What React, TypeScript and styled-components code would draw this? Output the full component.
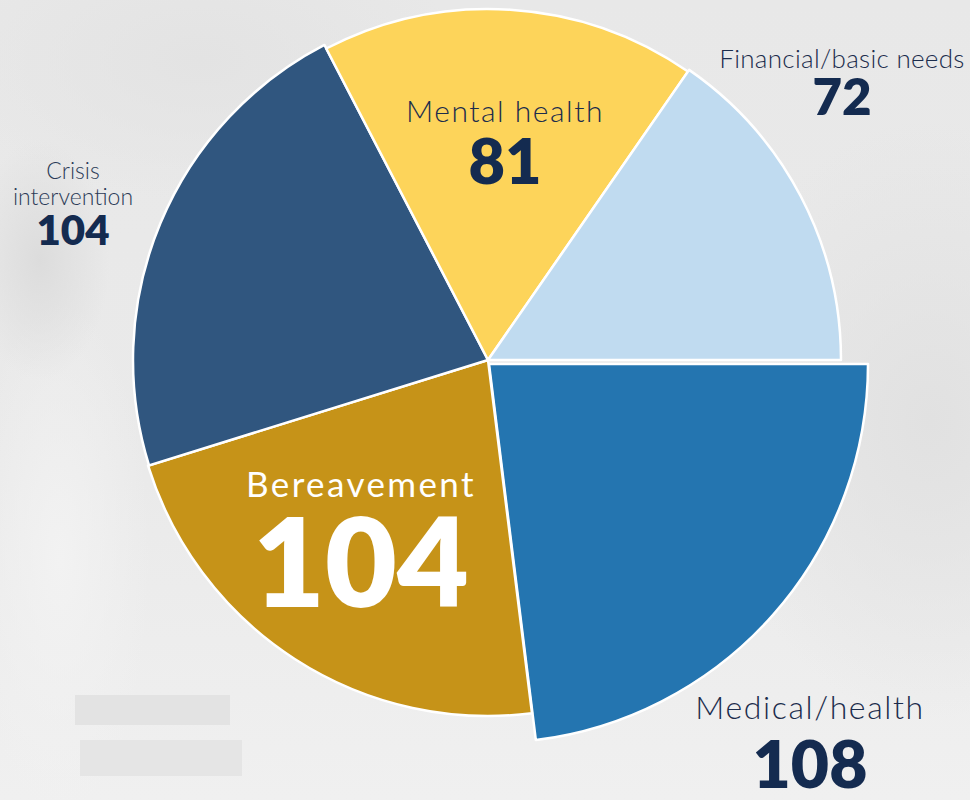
import React from 'react'
import styled, { createGlobalStyle } from 'styled-components'

const GlobalStyle = createGlobalStyle`
  html, body {
    margin: 0;
    padding: 0;
    background: #ececec;
  }
  * {
    box-sizing: border-box;
  }
`

type Slice = {
  label: string
  value: number
  color: string
  r: number
  cx: number
  cy: number
}

const slices: Slice[] = [
  { label: 'Medical/health', value: 108, color: '#2475b0', r: 379, cx: 489, cy: 364 },
  { label: 'Bereavement', value: 104, color: '#c69318', r: 356, cx: 488, cy: 360 },
  { label: 'Crisis intervention', value: 104, color: '#30567f', r: 355, cx: 488, cy: 360 },
  { label: 'Mental health', value: 81, color: '#fdd45a', r: 351, cx: 488, cy: 360 },
  { label: 'Financial/basic needs', value: 72, color: '#c0dbf0', r: 353, cx: 488, cy: 360 },
]

const total = slices.reduce((sum, s) => sum + s.value, 0)

function arcPath(cx: number, cy: number, r: number, a0: number, a1: number) {
  const rad = (a: number) => (a * Math.PI) / 180
  const x0 = cx + r * Math.cos(rad(a0))
  const y0 = cy + r * Math.sin(rad(a0))
  const x1 = cx + r * Math.cos(rad(a1))
  const y1 = cy + r * Math.sin(rad(a1))
  const large = a1 - a0 > 180 ? 1 : 0
  return `M ${cx} ${cy} L ${x0} ${y0} A ${r} ${r} 0 ${large} 1 ${x1} ${y1} Z`
}

const PieChart: React.FC = () => {
  let start = 0
  const paths = slices.map((s) => {
    const sweep = (s.value / total) * 360
    const d = arcPath(s.cx, s.cy, s.r, start, start + sweep)
    start += sweep
    return <path key={s.label} d={d} fill={s.color} stroke="#ffffff" strokeWidth={2.5} strokeLinejoin="round" />
  })
  return (
    <PieSvg viewBox="0 0 970 800" width={970} height={800}>
      {paths}
    </PieSvg>
  )
}

const App: React.FC = () => {
  return (
    <>
      <GlobalStyle />
      <Stage>
        <PieChart />

        <Callout $cx={505} $top={95} $width={260}>
          <Name $size={30} $spacing={1.5}>Mental health</Name>
          <Count $size={63} $gap={3}>81</Count>
        </Callout>

        <Callout $cx={842} $top={45} $width={260}>
          <Name $size={26} $spacing={0.3}>Financial/basic needs</Name>
          <Count $size={51} $gap={-1}>72</Count>
        </Callout>

        <Callout $cx={73} $top={157} $width={150}>
          <Name $size={23} $lh={26} $tone="#2c3b57">
            Crisis
            <br />
            intervention
          </Name>
          <Count $size={42} $gap={-1}>104</Count>
        </Callout>

        <Callout $cx={361} $top={466} $width={300}>
          <Name $size={35} $weight={400} $spacing={2.4} $tone="#ffffff">
            Bereavement
          </Name>
          <Count $size={124} $gap={-4} $tone="#ffffff">104</Count>
        </Callout>

        <Callout $cx={810} $top={691} $width={280}>
          <Name $size={32} $spacing={1.6}>Medical/health</Name>
          <Count $size={66} $gap={7}>108</Count>
        </Callout>
      </Stage>
    </>
  )
}

const Stage = styled.div`
  position: relative;
  width: 970px;
  height: 800px;
  overflow: hidden;
  font-family: Lato, 'Liberation Sans', sans-serif;
  background:
    linear-gradient(#e3e3e3, #e3e3e3) 75px 695px / 155px 30px no-repeat,
    linear-gradient(#e5e5e5, #e5e5e5) 80px 740px / 162px 36px no-repeat,
    radial-gradient(ellipse 70px 120px at 40px 260px, #dcdcdc, rgba(220, 220, 220, 0)),
    radial-gradient(ellipse 90px 260px at 60px 560px, #f2f2f2, rgba(242, 242, 242, 0)),
    radial-gradient(ellipse 220px 300px at 930px 420px, #e1e1e1, rgba(225, 225, 225, 0)),
    radial-gradient(ellipse 260px 140px at 200px 60px, #e3e3e3, rgba(227, 227, 227, 0)),
    linear-gradient(180deg, #e8e8e8 0%, #eaeaea 60%, #f0f0f0 100%);
`

const PieSvg = styled.svg`
  position: absolute;
  inset: 0;
  display: block;
`

const Callout = styled.div<{ $cx: number; $top: number; $width: number }>`
  position: absolute;
  top: ${(p) => p.$top}px;
  left: ${(p) => p.$cx - p.$width / 2}px;
  width: ${(p) => p.$width}px;
  display: flex;
  flex-direction: column;
  align-items: center;
  text-align: center;
  color: #142b50;
`

const Name = styled.div<{
  $size: number
  $lh?: number
  $weight?: number
  $spacing?: number
  $tone?: string
}>`
  font-size: ${(p) => p.$size}px;
  line-height: ${(p) => (p.$lh ? `${p.$lh}px` : 1)};
  font-weight: ${(p) => p.$weight ?? 300};
  letter-spacing: ${(p) => p.$spacing ?? 0}px;
  color: ${(p) => p.$tone ?? '#1b2c4c'};
  white-space: nowrap;
`

const Count = styled.div<{ $size: number; $gap: number; $tone?: string }>`
  margin-top: ${(p) => p.$gap}px;
  font-size: ${(p) => p.$size}px;
  line-height: 1;
  font-weight: 800;
  color: ${(p) => p.$tone ?? '#142b50'};
`

export default App
